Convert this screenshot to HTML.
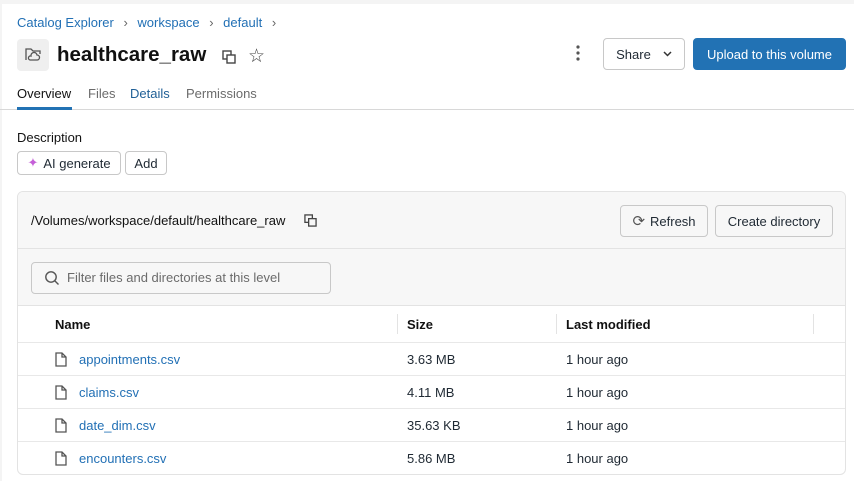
<!DOCTYPE html>
<html><head><style>
*{box-sizing:border-box;margin:0;padding:0}
body{width:854px;height:481px;overflow:hidden;background:#fff;font-family:"Liberation Sans",sans-serif;color:#1f2933;position:relative;font-size:13px}
.a{position:absolute}
.btn{position:absolute;border:1px solid #c8c8c8;border-radius:4px;background:#fff;font-size:13px;display:flex;align-items:center;justify-content:center;color:#1f2933}
.link{color:#2270b5}
.row{position:absolute;left:0;right:0;height:33px;border-top:1px solid #e8e8e8;font-size:13px}
.row span{position:absolute;top:9px}
</style></head><body>
<div class="a" style="left:0;top:0;width:854px;height:4px;background:#f4f4f4"></div>
<div class="a" style="left:0;top:0;width:2px;height:481px;background:#f4f4f4"></div>
<div class="a" style="left:17px;top:15px;font-size:13px"><span class="link">Catalog Explorer</span> <span style="color:#666;margin:0 6px">›</span> <span class="link">workspace</span> <span style="color:#666;margin:0 6px">›</span> <span class="link">default</span> <span style="color:#666;margin-left:6px">›</span></div>
<div class="a" style="left:17px;top:39px;width:32px;height:32px;background:#efefef;border-radius:4px"></div>
<svg class="a" style="left:24px;top:46px" width="18" height="18" viewBox="0 0 18 18" fill="none" stroke="#555" stroke-width="1.3"><path d="M2 14V3h5l2 2h7v3"/><path d="M6 14h7a2.5 2.5 0 0 0 0-5 3 3 0 0 0-6 1 2 2 0 0 0-1 4z"/></svg>
<div class="a" style="left:57px;top:43px;font-size:20.5px;font-weight:bold;color:#111">healthcare_raw</div>
<svg class="a" style="left:222px;top:50px" width="14" height="14" viewBox="0 0 14 14" fill="none" stroke="#444" stroke-width="1.4"><rect x="1" y="1" width="8" height="8"/><rect x="5" y="5" width="8" height="8" fill="#fff"/></svg>
<div class="a" style="left:248px;top:45px;font-size:19px;color:#444">☆</div>
<svg class="a" style="left:575px;top:44px" width="6" height="18" viewBox="0 0 6 18" fill="#555"><circle cx="3" cy="3" r="1.6"/><circle cx="3" cy="9" r="1.6"/><circle cx="3" cy="15" r="1.6"/></svg>
<div class="btn" style="left:603px;top:38px;width:82px;height:32px">Share <svg style="margin-left:12px" width="9" height="6" viewBox="0 0 9 6" fill="none" stroke="#333" stroke-width="1.5"><path d="M1 1l3.5 3.5L8 1"/></svg></div>
<div class="btn" style="left:693px;top:38px;width:153px;height:32px;background:#2272b4;border-color:#2272b4;color:#fff">Upload to this volume</div>
<div class="a" style="left:0;top:109px;width:854px;height:1px;background:#d8d8d8"></div>
<div class="a" style="left:17px;top:86px;font-size:13px;color:#111">Overview</div>
<div class="a" style="left:17px;top:107px;width:55px;height:3px;background:#2272b4"></div>
<div class="a" style="left:88px;top:86px;color:#6b6b6b">Files</div>
<div class="a link" style="left:130px;top:86px;color:#1f5f96">Details</div>
<div class="a" style="left:186px;top:86px;color:#6b6b6b">Permissions</div>
<div class="a" style="left:17px;top:130px;font-size:13px;color:#111">Description</div>
<div class="btn" style="left:17px;top:151px;width:104px;height:24px"><span style="color:#c55fd8;margin-right:5px">✦</span>AI generate</div>
<div class="btn" style="left:125px;top:151px;width:42px;height:24px">Add</div>
<div class="a" style="left:17px;top:191px;width:829px;height:284px;border:1px solid #e3e3e3;border-radius:6px;overflow:hidden;background:#fff">
 <div class="a" style="left:0;top:0;width:100%;height:113px;background:#f7f7f7"></div>
 <div class="a" style="left:0;top:56px;width:100%;height:1px;background:#e3e3e3"></div>
 <div class="a" style="left:13px;top:21px;font-size:13px;color:#111">/Volumes/workspace/default/healthcare_raw</div>
 <svg class="a" style="left:286px;top:22px" width="13" height="13" viewBox="0 0 14 14" fill="none" stroke="#444" stroke-width="1.4"><rect x="1" y="1" width="8" height="8"/><rect x="5" y="5" width="8" height="8" fill="#f7f7f7"/></svg>
 <div class="btn" style="left:602px;top:13px;width:88px;height:32px;background:#f7f7f7"><span style="font-size:15px;color:#555;margin-right:5px">⟳</span>Refresh</div>
 <div class="btn" style="left:697px;top:13px;width:118px;height:32px;background:#f7f7f7">Create directory</div>
 <div class="a" style="left:13px;top:70px;width:300px;height:32px;border:1px solid #c8c8c8;border-radius:4px;background:#f7f7f7"></div>
 <svg class="a" style="left:26px;top:78px" width="16" height="16" viewBox="0 0 16 16" fill="none" stroke="#555" stroke-width="1.4"><circle cx="7" cy="7" r="5.2"/><path d="M11 11l3.5 3.5"/></svg>
 <div class="a" style="left:49px;top:78px;color:#6b6b6b">Filter files and directories at this level</div>
 <div class="a" style="left:0;top:113px;width:100%;height:1px;background:#e3e3e3"></div>
 <div class="row" style="top:114px;border-top:none;height:37px;font-weight:bold;color:#111"><span style="left:37px;top:11px">Name</span><span style="left:389px;top:11px">Size</span><span style="left:548px;top:11px">Last modified</span>
  <i class="a" style="left:379px;top:8px;width:1px;height:20px;background:#e3e3e3"></i><i class="a" style="left:538px;top:8px;width:1px;height:20px;background:#e3e3e3"></i><i class="a" style="left:795px;top:8px;width:1px;height:20px;background:#e3e3e3"></i></div>
 <div class="row" style="top:150px"><svg class="a" style="left:37px;top:9px" width="12" height="15" viewBox="0 0 12 15" fill="none" stroke="#555" stroke-width="1.3"><path d="M1 1h6l4 4v9H1z M7 1v4h4"/></svg><span class="link" style="left:61px">appointments.csv</span><span style="left:389px">3.63 MB</span><span style="left:548px">1 hour ago</span></div>
 <div class="row" style="top:183px"><svg class="a" style="left:37px;top:9px" width="12" height="15" viewBox="0 0 12 15" fill="none" stroke="#555" stroke-width="1.3"><path d="M1 1h6l4 4v9H1z M7 1v4h4"/></svg><span class="link" style="left:61px">claims.csv</span><span style="left:389px">4.11 MB</span><span style="left:548px">1 hour ago</span></div>
 <div class="row" style="top:216px"><svg class="a" style="left:37px;top:9px" width="12" height="15" viewBox="0 0 12 15" fill="none" stroke="#555" stroke-width="1.3"><path d="M1 1h6l4 4v9H1z M7 1v4h4"/></svg><span class="link" style="left:61px">date_dim.csv</span><span style="left:389px">35.63 KB</span><span style="left:548px">1 hour ago</span></div>
 <div class="row" style="top:249px"><svg class="a" style="left:37px;top:9px" width="12" height="15" viewBox="0 0 12 15" fill="none" stroke="#555" stroke-width="1.3"><path d="M1 1h6l4 4v9H1z M7 1v4h4"/></svg><span class="link" style="left:61px">encounters.csv</span><span style="left:389px">5.86 MB</span><span style="left:548px">1 hour ago</span></div>
</div>
</body></html>
